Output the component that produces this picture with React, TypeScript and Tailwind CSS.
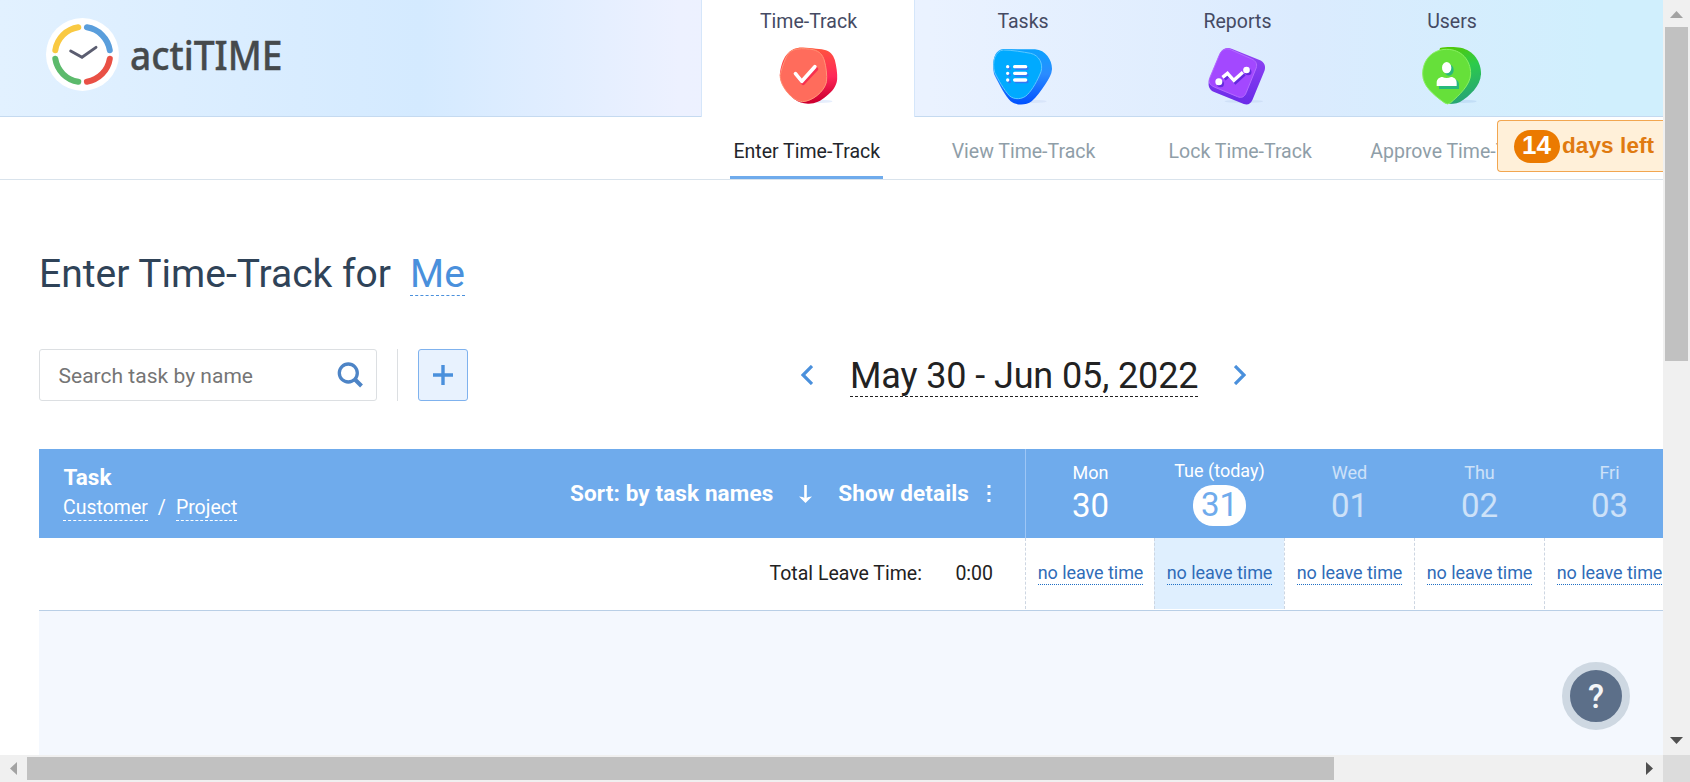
import type { ReactNode } from "react";

function Logo() {
  return (
    <svg className="block h-[80px] w-[250px]" viewBox="0 0 250 80">
      <circle cx="36.5" cy="40.4" r="36.5" fill="#fff" />
      <g fill="none" strokeWidth="6" strokeLinecap="round">
        <path d="M32.3 13.3A27.5 27.5 0 0 0 9.3 36.2" stroke="#f9c942" />
        <path d="M40.9 13.3A27.5 27.5 0 0 1 63.8 36.2" stroke="#5a9edc" />
        <path d="M9.3 44.8A27.5 27.5 0 0 0 32.3 67.7" stroke="#5cba6c" />
        <path d="M63.8 44.8A27.5 27.5 0 0 1 40.9 67.7" stroke="#e95045" />
      </g>
      <path d="M24.7 37L36 43.3L50 33.4" fill="none" stroke="#5b5d70" strokeWidth="2.9" strokeLinecap="round" />
      <text
        x="84"
        y="55.7"
        fontFamily="'Noto Sans', sans-serif"
        fontSize="40.5"
        fontWeight="500"
        fill="#464a4c"
        stroke="#464a4c"
        strokeWidth="0.4"
        textLength="152.5"
        lengthAdjust="spacingAndGlyphs"
      >
        actiTIME
      </text>
    </svg>
  );
}

function TimeTrackIcon() {
  return (
    <svg className="block h-[62px] w-[66px]" viewBox="16.5 12 198 186">
      <defs>
        <linearGradient id="tt" x1="0" y1="0" x2="0.1" y2="1">
          <stop offset="0" stopColor="#ff5b3a" />
          <stop offset="0.6" stopColor="#ff2859" />
          <stop offset="1" stopColor="#cf0030" />
        </linearGradient>
      </defs>
      <ellipse cx="150" cy="184" rx="36" ry="5" fill="#e6eefc" />
      <path d="M85 23C100 22 145 27 160 29C178 32 188 44 193 60C198 80 201 100 200 118C198 140 185 155 168 168C150 184 132 192 112 191C96 191 85 187 72 178C50 160 28 130 28 105C30 80 40 28 85 23Z" fill="url(#tt)" />
      <path d="M82 27C96 25 112 26 128 29C148 34 156 45 161 60C167 80 170 105 168 125C162 155 125 184 96 185C82 184 68 176 56 163C40 146 29 126 29 106C32 90 38 72 46 54C53 38 64 29 82 27Z" fill="#ff6c5c" stroke="#ff9578" strokeWidth="3" />
      <g fill="none" strokeWidth="11" strokeLinecap="round" strokeLinejoin="round">
        <path d="M80 107L98 130L138 87" stroke="#f7304f" />
        <path d="M75 101L94 124L133 80" stroke="#fff" />
      </g>
    </svg>
  );
}

function TasksIcon() {
  return (
    <svg className="block h-[62px] w-[66px]" viewBox="660 12 198 186">
      <defs>
        <linearGradient id="tk" x1="0" y1="0" x2="0" y2="1">
          <stop offset="0" stopColor="#0aa2ff" />
          <stop offset="0.45" stopColor="#2b8cff" />
          <stop offset="1" stopColor="#0050ff" />
        </linearGradient>
      </defs>
      <ellipse cx="790" cy="184" rx="40" ry="5" fill="#d8e5fa" />
      <path d="M700 27L795 28C828 30 847 62 846 88C845 104 836 118 826 133C812 153 800 172 785 184C768 197 738 197 722 184C706 168 690 138 672 102C665 66 672 30 700 27Z" fill="url(#tk)" />
      <path d="M700 30C725 30 760 36 782 40C808 46 820 72 813 95C802 122 788 148 772 164C758 179 732 180 718 167C702 150 684 118 674 97C665 65 676 32 700 30Z" fill="#00aaff" stroke="#5cc8ff" strokeWidth="3" />
      <g stroke="#3478f2" strokeWidth="10" strokeLinecap="round">
        <path d="M718 85h.1M718 105h.1M718 125h.1M739 85H771M739 105H771M739 125H771" />
      </g>
      <g stroke="#fff" strokeWidth="10" strokeLinecap="round">
        <path d="M713 80h.1M713 100h.1M713 120h.1M734 80H767M734 100H767M734 120H767" />
      </g>
    </svg>
  );
}

function ReportsIcon() {
  return (
    <svg className="block h-[62px] w-[66px]" viewBox="28.5 12 198 186">
      <defs>
        <linearGradient id="rp" x1="0" y1="0" x2="0" y2="1">
          <stop offset="0" stopColor="#9445f5" />
          <stop offset="1" stopColor="#6a2be8" />
        </linearGradient>
      </defs>
      <ellipse cx="145" cy="184" rx="58" ry="5" fill="#cfe0f7" />
      <path d="M86 27C94 23 102 24 110 27L192 60C206 66 212 78 207 92L171 179C166 191 157 196 145 192L56 156C42 149 37 140 40 122L73 42C76 34 80 30 86 27Z" fill="url(#rp)" />
      <path d="M87 28C94 25 101 27 108 30L169 57C181 63 186 71 182 84L152 158C147 171 138 175 126 170L56 141C42 134 38 126 43 113L71 46C75 36 80 31 87 28Z" fill="#a348ff" stroke="#b46bff" strokeWidth="3" />
      <g fill="none" stroke="#6429de" strokeWidth="10">
        <path d="M87 118L101 106L120 127L147 103" />
      </g>
      <circle cx="75" cy="131" r="10.5" fill="#6429de" />
      <circle cx="158" cy="96" r="10" fill="#6429de" />
      <path d="M81 112L96 100L115 121L142 97" fill="none" stroke="#fff" strokeWidth="10" />
      <circle cx="70" cy="125" r="10.5" fill="#fff" />
      <circle cx="153" cy="90" r="10" fill="#fff" />
    </svg>
  );
}

function UsersIcon() {
  return (
    <svg className="block h-[62px] w-[66px]" viewBox="672 12 198 186">
      <defs>
        <linearGradient id="us" x1="0.2" y1="0" x2="0.5" y2="1">
          <stop offset="0" stopColor="#55c800" />
          <stop offset="0.45" stopColor="#2ccb4b" />
          <stop offset="1" stopColor="#27a476" />
        </linearGradient>
      </defs>
      <ellipse cx="805" cy="184" rx="40" ry="5" fill="#c2def6" />
      <path d="M735 24C750 20 780 20 797 23C835 31 859 65 858 103C856 138 825 168 795 186C782 192 768 192 755 192L715 100Z" fill="url(#us)" />
      <path d="M755 28C799 28 827 60 827 102C826 135 792 166 766 189Q757 195 748 188C712 162 683 137 683 102C683 60 712 28 755 28Z" fill="#66e03a" stroke="#8af064" strokeWidth="3" />
      <g fill="#27b97c">
        <ellipse cx="762" cy="90" rx="14" ry="17" />
        <path d="M732 147V133C732 124 740 117 749 117Q761 123 774 117C784 117 792 124 792 133V147Z" />
      </g>
      <g fill="#fff">
        <ellipse cx="755" cy="83" rx="14" ry="17" />
        <path d="M725 138V128C725 118 733 111 742 111Q755 117 768 111C777 111 785 118 785 128V138Z" />
      </g>
    </svg>
  );
}

function MainTab({ label, active, children }: { label: string; active?: boolean; children: ReactNode }) {
  return (
    <div
      className={
        active
          ? "flex h-[117px] w-[214px] shrink-0 flex-col items-center border-x border-[#d5e6fa] bg-white pl-px"
          : "flex h-[116px] w-[214.5px] shrink-0 flex-col items-center pl-[1.5px]"
      }
    >
      <div className="h-[44px] text-[19.5px] leading-[43px] text-[#454a63]">{label}</div>
      {children}
    </div>
  );
}

function SubTab({ label, active }: { label: string; active?: boolean }) {
  return (
    <div className="flex w-[216.7px] shrink-0 justify-center">
      <div
        className={
          active
            ? "h-[62px] border-b-[3px] border-[#6fabec] px-[3px] pt-[6px] text-[19.5px] leading-[57px] text-[#22252b]"
            : "h-[62px] px-[3px] pt-[6px] text-[19.5px] leading-[57px] whitespace-nowrap text-[#8f9ea8]"
        }
      >
        {label}
      </div>
    </div>
  );
}

const days = [
  { name: "Mon", num: "30", state: "past" },
  { name: "Tue (today)", num: "31", state: "today" },
  { name: "Wed", num: "01", state: "future" },
  { name: "Thu", num: "02", state: "future" },
  { name: "Fri", num: "03", state: "future" },
];

function DayHead({ name, num, state }: { name: string; num: string; state: string }) {
  if (state === "today") {
    return (
      <div className="flex w-[130px] shrink-0 flex-col items-center pt-[11px] pl-px text-white">
        <div className="h-[25px] text-[18px] leading-[22px]">{name}</div>
        <div className="h-[41px] w-[53px] rounded-[20px] bg-white text-center text-[33px] leading-[40px] text-[#6fabec]">
          {num}
        </div>
      </div>
    );
  }
  return (
    <div
      className={
        state === "past"
          ? "flex w-[129px] shrink-0 flex-col items-center border-l border-[#9dc6f6] pt-[13px] pl-px text-white"
          : "flex w-[130px] shrink-0 flex-col items-center pt-[13px] pl-px text-white/65"
      }
    >
      <div className="h-[24px] text-[18px] leading-[22px]">{name}</div>
      <div className="text-[33px] leading-[40px]">{num}</div>
    </div>
  );
}

function Header() {
  return (
    <header className="flex h-[117px] shrink-0 border-b border-[#c5daf0] bg-[linear-gradient(90deg,#e2f1ff_0px,#d4eaff_420px,#edf1ff_680px,#eaf2ff_930px,#dbebfe_1300px,#d0effd_1600px,#d0effd_1663px)]">
      <div className="w-[701px] shrink-0 pt-[14px] pl-[46px]">
        <Logo />
      </div>
      <MainTab label="Time-Track" active>
        <TimeTrackIcon />
      </MainTab>
      <MainTab label="Tasks">
        <TasksIcon />
      </MainTab>
      <MainTab label="Reports">
        <ReportsIcon />
      </MainTab>
      <MainTab label="Users">
        <UsersIcon />
      </MainTab>
    </header>
  );
}

function Toolbar() {
  return (
    <div className="mt-[52px] flex h-[52px] items-center">
      <div className="flex h-[52px] w-[338px] shrink-0 items-center justify-between rounded-[3px] border border-[#dcdfe2] pr-[12px] pl-[18.5px]">
        <span className="pt-px text-[21px] leading-[52px] tracking-[0.02px] text-[#757575]">Search task by name</span>
        <svg className="h-[28px] w-[28px]" viewBox="0 0 28 28" fill="none" stroke="#4d84c6" strokeWidth="3.3">
          <circle cx="12.3" cy="12" r="9" />
          <path d="M18.5 18L25.5 25" strokeWidth="4" />
        </svg>
      </div>
      <div className="ml-[20px] h-[52px] w-px shrink-0 bg-[#dcdfe2]" />
      <div className="ml-[20px] flex h-[52px] w-[50px] shrink-0 items-center justify-center rounded-[3px] border border-[#7fb2ee] bg-[#e8f2fe]">
        <svg className="h-[20px] w-[20px]" viewBox="0 0 20 20" stroke="#4a90dc" strokeWidth="3.4">
          <path d="M10 0V20M0 10H20" />
        </svg>
      </div>
      <svg className="ml-[333px] h-[20px] w-[12px] shrink-0" viewBox="0 0 12 20" fill="none" stroke="#4a90dc" strokeWidth="3.2">
        <path d="M11 1L2 10L11 19" />
      </svg>
      <div className="ml-[37px] h-[44px] shrink-0 border-b border-dashed border-[#222] text-[36px] leading-[46px] tracking-[-0.12px] text-[#222]">
        May 30 - Jun 05, 2022
      </div>
      <svg className="ml-[36px] h-[20px] w-[12px] shrink-0" viewBox="0 0 12 20" fill="none" stroke="#4a90dc" strokeWidth="3.2">
        <path d="M1 1L10 10L1 19" />
      </svg>
    </div>
  );
}

function TaskTable() {
  return (
    <div className="mt-[48px] flex w-[1624px] grow flex-col overflow-hidden">
      <div className="flex h-[89px] shrink-0 bg-[#6fabec]">
        <div className="flex w-[986px] shrink-0 justify-between text-white">
          <div className="pt-[14px] pl-[24px]">
            <div className="pl-[0.5px] text-[22.5px] leading-[28px] font-bold">Task</div>
            <div className="mt-[4px] flex text-[19.5px] leading-[25px]">
              <span className="border-b border-dashed border-white">Customer</span>
              <span className="w-[28px] text-center">/</span>
              <span className="border-b border-dashed border-white">Project</span>
            </div>
          </div>
          <div className="flex h-[89px] items-center text-[22.5px] font-bold tracking-[0.12px]">
            <span>Sort: by task names</span>
            <svg className="ml-[26px] h-[18px] w-[13px]" viewBox="0 0 13 18">
              <path d="M6.5 0V15" stroke="#fff" strokeWidth="2.6" />
              <path d="M0 11.5Q4 11.5 6.5 13.5Q9 11.5 13 11.5L6.5 18Z" fill="#fff" />
            </svg>
            <span className="ml-[26px]">Show details</span>
            <svg className="mr-[34px] ml-[18px] h-[17px] w-[4px]" viewBox="0 0 4 17" fill="#fff">
              <path d="M.5 0h3v3h-3zM.5 7h3v3h-3zM.5 14h3v3h-3z" />
            </svg>
          </div>
        </div>
        {days.map((d) => (
          <DayHead key={d.num} {...d} />
        ))}
      </div>
      <div className="flex h-[73px] shrink-0 border-b border-[#b9cfe6] bg-white">
        <div className="flex w-[986px] shrink-0 justify-end pt-[7px] pr-[32px] text-[19.5px] leading-[58px] text-[#222]">
          <span>Total Leave Time:</span>
          <span className="ml-[33.5px]">0:00</span>
        </div>
        {days.map((d) => (
          <div
            key={d.num}
            className={
              d.state === "today"
                ? "flex h-[71px] w-[130px] shrink-0 justify-center border-l border-dashed border-[#cdd6e2] bg-[#dfeffe] pt-[24px]"
                : d.state === "past"
                  ? "flex h-[71px] w-[129px] shrink-0 justify-center border-l border-dashed border-[#cdd6e2] pt-[24px] pl-px"
                  : "flex h-[71px] w-[130px] shrink-0 justify-center border-l border-dashed border-[#cdd6e2] pt-[24px]"
            }
          >
            <span className="h-[23px] border-b border-dotted border-[#1f6fc5] text-[18px] leading-[22px] tracking-[-0.06px] whitespace-nowrap text-[#2f6cb8]">
              no leave time
            </span>
          </div>
        ))}
      </div>
      <div className="grow bg-[#f4f8fe]" />
    </div>
  );
}

export default function App() {
  return (
    <div className="flex h-[782px] w-[1690px] flex-col overflow-hidden bg-white font-['Roboto',sans-serif]">
      <div className="flex h-[755px]">
        <div className="relative flex h-[755px] w-[1663px] shrink-0 flex-col overflow-hidden">
          <Header />
          <nav className="flex h-[63px] shrink-0 border-b border-[#d9e3ec] pl-[698.5px]">
            <SubTab label="Enter Time-Track" active />
            <SubTab label="View Time-Track" />
            <SubTab label="Lock Time-Track" />
            <SubTab label="Approve Time-Track" />
          </nav>
          <main className="flex grow flex-col pt-[71px] pl-[39px]">
            <div className="flex h-[46px] items-baseline text-[39px] leading-[46px] text-[#2f4358]">
              <h1>Enter Time-Track for</h1>
              <span className="ml-[19px] border-b border-dashed border-[#4a90dc] leading-[41px] text-[#4a90dc]">Me</span>
            </div>
            <Toolbar />
            <TaskTable />
          </main>
          <div className="absolute top-[120px] right-0 flex h-[52px] w-[166px] items-center rounded-l-[4px] border border-r-0 border-[#f2a650] bg-[#fff0d9] pl-[16px] font-['Liberation_Sans',Arial,sans-serif] font-bold">
            <span className="h-[33px] w-[46px] rounded-full bg-[#eb7a00] pr-px text-center text-[26px] leading-[31px] text-white">
              14
            </span>
            <span className="ml-[2px] text-[22.5px] leading-[26px] tracking-[0.1px] text-[#e07a10]">days left</span>
          </div>
          <div className="absolute top-[662px] left-[1562px] flex h-[68px] w-[68px] items-center justify-center rounded-full border-[8px] border-[#ced8e2] bg-[#5c6f89] pt-[2px] text-[33px] leading-[52px] font-medium text-[#f4f6f8]">
            ?
          </div>
        </div>
        <div className="flex h-[755px] w-[27px] shrink-0 flex-col items-center justify-between bg-[#f0f0f0]">
          <div className="flex flex-col items-center">
            <svg className="mt-[11px] h-[7px] w-[13px]" viewBox="0 0 13 7" fill="#a3a3a3">
              <path d="M0 7L6.5 0L13 7Z" />
            </svg>
            <div className="mt-[9px] h-[334px] w-[23px] bg-[#c1c1c1]" />
          </div>
          <svg className="mb-[11px] h-[7px] w-[13px]" viewBox="0 0 13 7" fill="#505050">
            <path d="M0 0L6.5 7L13 0Z" />
          </svg>
        </div>
      </div>
      <div className="flex h-[27px] shrink-0 items-center bg-[#f0f0f0]">
        <svg className="ml-[10px] h-[13px] w-[7px]" viewBox="0 0 7 13" fill="#a3a3a3">
          <path d="M7 0L0 6.5L7 13Z" />
        </svg>
        <div className="ml-[10px] h-[23px] w-[1307px] bg-[#c1c1c1]" />
        <svg className="ml-auto h-[13px] w-[7px]" viewBox="0 0 7 13" fill="#505050">
          <path d="M0 0L7 6.5L0 13Z" />
        </svg>
        <div className="ml-[10px] h-[27px] w-[27px] bg-[#dcdcdc]" />
      </div>
    </div>
  );
}
